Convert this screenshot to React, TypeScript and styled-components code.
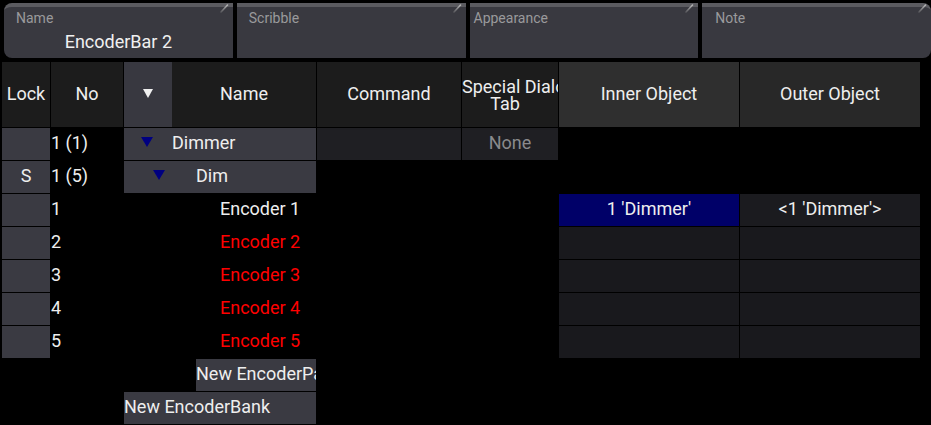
import React from "react";
import styled, { createGlobalStyle, css } from "styled-components";

const GlobalStyle = createGlobalStyle`
  html, body { margin: 0; padding: 0; background: #000; }
  body {
    font-family: Roboto, "Liberation Sans", Arial, sans-serif;
    color: #eeeeee;
    width: 931px;
    height: 425px;
    overflow: hidden;
  }
`;

const Page = styled.div`
  display: flex;
  flex-direction: column;
  gap: 4px;
  padding-top: 3px;
`;

const FieldBar = styled.div`
  display: flex;
  gap: 4px;
  padding-left: 4px;
`;

type Corner = "left" | "right" | "none";

const Field = styled.div<{ $corner: Corner }>`
  position: relative;
  flex: 1;
  height: 55px;
  box-sizing: border-box;
  background: #393940;
  border-top: 4px solid #5b5b60;
  display: flex;
  flex-direction: column;
  ${(p) =>
    p.$corner === "left" &&
    css`
      border-radius: 8px 0 0 8px;
    `}
  ${(p) =>
    p.$corner === "right" &&
    css`
      border-radius: 0 8px 8px 0;
    `}
`;

const FieldLabel = styled.div<{ $pad: number }>`
  font-size: 14px;
  color: #9a9a9c;
  padding: 3px 0 0 ${(p) => p.$pad}px;
  line-height: 16px;
`;

const FieldValue = styled.div`
  font-size: 18px;
  color: #f0f0f0;
  text-align: center;
  padding-top: 5px;
  line-height: 21px;
`;

const Pencil = styled.svg`
  position: absolute;
  top: -4px;
  right: 4px;
  width: 10px;
  height: 10px;
`;

const Table = styled.div`
  display: grid;
  grid-template-columns: 48px 72px 192px 144px 96px 180px 180px;
  grid-template-rows: 65px;
  grid-auto-rows: 32px;
  gap: 1px;
  padding-left: 2px;
`;

type Tone = "dark" | "inner" | "outer";
const toneBg: Record<Tone, string> = {
  dark: "#1c1c1c",
  inner: "#2f2f2f",
  outer: "#282828",
};

const HeaderCell = styled.div<{ $tone?: Tone }>`
  background: ${(p) => toneBg[p.$tone ?? "dark"]};
  display: flex;
  align-items: center;
  justify-content: center;
  font-size: 18px;
  color: #eeeeee;
  overflow: hidden;
  white-space: nowrap;
  padding-bottom: 2px;
  box-sizing: border-box;
`;

const HeaderName = styled.div`
  background: #1c1c1c;
  display: flex;
  font-size: 18px;
`;

const TriSlot = styled.div`
  width: 48px;
  background: #383840;
  display: flex;
  align-items: center;
  justify-content: center;
  padding-bottom: 2px;
  box-sizing: border-box;
`;

const HeaderNameLabel = styled.div`
  flex: 1;
  display: flex;
  align-items: center;
  justify-content: center;
  padding-bottom: 2px;
`;

const TwoLine = styled.div`
  background: #1c1c1c;
  font-size: 18px;
  line-height: 17px;
  text-align: center;
  white-space: nowrap;
  overflow: hidden;
  display: flex;
  flex-direction: column;
  justify-content: center;
`;

const Line = styled.div<{ $shift?: number }>`
  text-align: center;
  padding-right: ${(p) => p.$shift ?? 0}px;
`;

const DownTri = styled.div<{ $color: string; $w: number; $h: number }>`
  width: 0;
  height: 0;
  border-left: ${(p) => p.$w / 2}px solid transparent;
  border-right: ${(p) => p.$w / 2}px solid transparent;
  border-top: ${(p) => p.$h}px solid ${(p) => p.$color};
  flex: none;
`;

const bodyText = css`
  font-size: 18px;
  box-sizing: border-box;
  padding-bottom: 4px;
`;

const LockCell = styled.div<{ $filled: boolean }>`
  ${bodyText}
  background: ${(p) => (p.$filled ? "#3a3a42" : "transparent")};
  display: flex;
  align-items: center;
  justify-content: center;
`;

const NoCell = styled.div`
  ${bodyText}
  display: flex;
  align-items: center;
  white-space: nowrap;
`;

const NameCell = styled.div`
  display: flex;
  align-items: stretch;
  overflow: hidden;
  font-size: 18px;
  white-space: nowrap;
`;

const GroupBox = styled.div`
  ${bodyText}
  flex: 1;
  background: #3a3a42;
  display: flex;
  align-items: center;
`;

const NewBox = styled.div<{ $start: number }>`
  ${bodyText}
  flex: 1;
  margin-left: ${(p) => p.$start}px;
  background: #3a3a42;
  display: flex;
  align-items: center;
  overflow: hidden;
`;

const Label = styled.span<{ $indent: number; $color?: string }>`
  margin-left: ${(p) => p.$indent}px;
  color: ${(p) => p.$color ?? "#eeeeee"};
  display: flex;
  align-items: center;
`;

const ItemLabel = styled.div<{ $indent: number; $color: string }>`
  ${bodyText}
  padding-left: ${(p) => p.$indent}px;
  color: ${(p) => p.$color};
  display: flex;
  align-items: center;
`;

const PropCell = styled.div<{ $filled: boolean; $muted?: boolean }>`
  ${bodyText}
  background: ${(p) => (p.$filled ? "#1f1f23" : "transparent")};
  color: ${(p) => (p.$muted ? "#8a8a8c" : "#eeeeee")};
  display: flex;
  align-items: center;
  justify-content: center;
`;

const ObjCell = styled.div<{ $state: "none" | "empty" | "selected" | "plain" }>`
  ${bodyText}
  background: ${(p) =>
    p.$state === "selected"
      ? "#000068"
      : p.$state === "none"
      ? "transparent"
      : p.$state === "plain"
      ? "#1b1b1f"
      : "#19191d"};
  display: flex;
  align-items: center;
  justify-content: center;
  white-space: nowrap;
`;

type NameSpec =
  | { kind: "group"; tri: number; text: number; label: string }
  | { kind: "item"; text: number; label: string; color: string }
  | { kind: "new"; start: number; label: string };

type Row = {
  lock: boolean;
  lockText?: string;
  no?: string;
  name: NameSpec;
  command?: boolean;
  special?: string;
  inner?: string;
  outer?: string;
  objects: boolean;
};

const RED = "#ff0000";
const WHITE = "#eeeeee";

const rows: Row[] = [
  { lock: true, no: "1 (1)", name: { kind: "group", tri: 17, text: 48, label: "Dimmer" }, command: true, special: "None", objects: false },
  { lock: true, lockText: "S", no: "1 (5)", name: { kind: "group", tri: 29, text: 72, label: "Dim" }, objects: false },
  { lock: true, no: "1", name: { kind: "item", text: 96, label: "Encoder 1", color: WHITE }, inner: "1 'Dimmer'", outer: "<1 'Dimmer'>", objects: true },
  { lock: true, no: "2", name: { kind: "item", text: 96, label: "Encoder 2", color: RED }, objects: true },
  { lock: true, no: "3", name: { kind: "item", text: 96, label: "Encoder 3", color: RED }, objects: true },
  { lock: true, no: "4", name: { kind: "item", text: 96, label: "Encoder 4", color: RED }, objects: true },
  { lock: true, no: "5", name: { kind: "item", text: 96, label: "Encoder 5", color: RED }, objects: true },
  { lock: false, name: { kind: "new", start: 72, label: "New EncoderPage" }, objects: false },
  { lock: false, name: { kind: "new", start: 0, label: "New EncoderBank" }, objects: false },
];

function NameContent({ spec }: { spec: NameSpec }) {
  if (spec.kind === "group") {
    return (
      <GroupBox>
        <Label $indent={spec.tri}>
          <DownTri $color="#000080" $w={12} $h={10} />
        </Label>
        <Label $indent={spec.text - spec.tri - 12}>{spec.label}</Label>
      </GroupBox>
    );
  }
  if (spec.kind === "item") {
    return (
      <ItemLabel $indent={spec.text} $color={spec.color}>
        {spec.label}
      </ItemLabel>
    );
  }
  return (
    <NewBox $start={spec.start}>
      <Label $indent={0}>{spec.label}</Label>
    </NewBox>
  );
}

const fields: { label: string; value?: string; corner: Corner; pad: number }[] = [
  { label: "Name", value: "EncoderBar 2", corner: "left", pad: 12 },
  { label: "Scribble", corner: "none", pad: 12 },
  { label: "Appearance", corner: "none", pad: 4 },
  { label: "Note", corner: "right", pad: 13 },
];

export default function App() {
  return (
    <>
      <GlobalStyle />
      <Page>
        <FieldBar>
          {fields.map((f) => (
            <Field key={f.label} $corner={f.corner}>
              <FieldLabel $pad={f.pad}>{f.label}</FieldLabel>
              {f.value && <FieldValue>{f.value}</FieldValue>}
              <Pencil viewBox="0 0 10 10">
                <defs>
                  <linearGradient id={`pg-${f.label}`} x1="1" y1="0" x2="0" y2="1">
                    <stop offset="0" stopColor="#b8b8b8" />
                    <stop offset="1" stopColor="#5a5a5e" />
                  </linearGradient>
                </defs>
                <line x1="2" y1="9" x2="8.5" y2="2" stroke={`url(#pg-${f.label})`} strokeWidth="1.6" strokeLinecap="round" />
              </Pencil>
            </Field>
          ))}
        </FieldBar>
        <Table>
          <HeaderCell>Lock</HeaderCell>
          <HeaderCell>No</HeaderCell>
          <HeaderName>
            <TriSlot>
              <DownTri $color="#f0f0f0" $w={11} $h={9} />
            </TriSlot>
            <HeaderNameLabel>Name</HeaderNameLabel>
          </HeaderName>
          <HeaderCell>Command</HeaderCell>
          <TwoLine>
            <Line>Special Dialog</Line>
            <Line $shift={10}>Tab</Line>
          </TwoLine>
          <HeaderCell $tone="inner">Inner Object</HeaderCell>
          <HeaderCell $tone="outer">Outer Object</HeaderCell>
          {rows.map((r, i) => (
            <React.Fragment key={i}>
              <LockCell $filled={r.lock}>{r.lockText}</LockCell>
              <NoCell>{r.no}</NoCell>
              <NameCell>
                <NameContent spec={r.name} />
              </NameCell>
              <PropCell $filled={!!r.command} />
              <PropCell $filled={!!r.special} $muted>
                {r.special}
              </PropCell>
              <ObjCell $state={!r.objects ? "none" : r.inner ? "selected" : "empty"}>{r.inner}</ObjCell>
              <ObjCell $state={!r.objects ? "none" : r.outer ? "plain" : "empty"}>{r.outer}</ObjCell>
            </React.Fragment>
          ))}
        </Table>
      </Page>
    </>
  );
}
